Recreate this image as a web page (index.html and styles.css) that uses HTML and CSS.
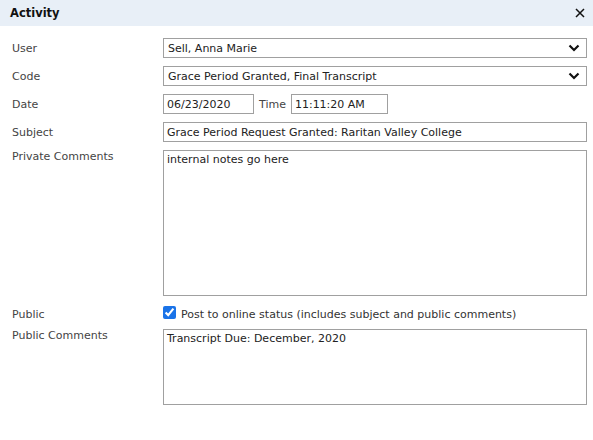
FILE: index.html
```html
<!DOCTYPE html>
<html lang="en">
<head>
    <meta charset="UTF-8">
    <title>Activity</title>
    <link rel="stylesheet" href="styles.css">
</head>
<body>
    <div class="dialog">
        <header class="dialog-title">
            <h1>Activity</h1>
            <span class="close">
                <svg width="10" height="10" viewBox="0 0 10 10"><path d="M1 1 L9 9 M9 1 L1 9" stroke="#111" stroke-width="1.5"/></svg>
            </span>
        </header>

        <div class="form">
            <label class="field-label">User</label>
            <div class="select-box">
                <span>Sell, Anna Marie</span>
                <svg width="12" height="8" viewBox="0 0 12 8"><path d="M1.5 1.5 L6 6 L10.5 1.5" fill="none" stroke="#111" stroke-width="2.2"/></svg>
            </div>

            <label class="field-label">Code</label>
            <div class="select-box">
                <span>Grace Period Granted, Final Transcript</span>
                <svg width="12" height="8" viewBox="0 0 12 8"><path d="M1.5 1.5 L6 6 L10.5 1.5" fill="none" stroke="#111" stroke-width="2.2"/></svg>
            </div>

            <label class="field-label">Date</label>
            <div class="date-row">
                <input class="text-input date-input" type="text" value="06/23/2020">
                <span class="inline-label">Time</span>
                <input class="text-input time-input" type="text" value="11:11:20 AM">
            </div>

            <label class="field-label">Subject</label>
            <input class="text-input" type="text" value="Grace Period Request Granted: Raritan Valley College">

            <label class="field-label top">Private Comments</label>
            <textarea class="text-area private">internal notes go here</textarea>

            <label class="field-label bottom">Public</label>
            <label class="check-row">
                <input type="checkbox" checked>
                <span>Post to online status (includes subject and public comments)</span>
            </label>

            <label class="field-label top">Public Comments</label>
            <textarea class="text-area public">Transcript Due: December, 2020</textarea>
        </div>
    </div>
</body>
</html>
```

FILE: styles.css
```css
/* Dialog base */
body {
    margin: 0;
    font-family: 'DejaVu Sans', sans-serif;
    font-size: 11px;
    color: #333333;
    background: #ffffff;
}

.dialog {
    width: 593px;
}

/* Title bar */
.dialog-title {
    display: flex;
    align-items: center;
    justify-content: space-between;
    height: 26px;
    padding: 0 8px 0 10px;
    background: #e8eff7;
}

.dialog-title h1 {
    margin: 0;
    font-size: 11.5px;
    font-weight: bold;
    color: #111111;
}

.close {
    display: flex;
}

/* Form grid */
.form {
    display: grid;
    grid-template-columns: 151px 1fr;
    row-gap: 8px;
    align-items: center;
    padding: 12px 6px 0 12px;
}

.field-label {
    color: #444444;
}

.field-label.top {
    align-self: start;
}

.field-label.bottom {
    align-self: end;
}

.select-box,
.text-input,
.text-area {
    box-sizing: border-box;
    border: 1px solid #a0a0a0;
    font-family: inherit;
    font-size: 11px;
    color: #222222;
    background: #ffffff;
    margin: 0;
}

.select-box {
    display: flex;
    align-items: center;
    justify-content: space-between;
    height: 20px;
    padding: 0 6px 0 4px;
}

.text-input {
    height: 20px;
    padding: 0 3px;
    width: 100%;
    outline: none;
}

.date-row {
    display: flex;
    align-items: center;
}

.date-row .date-input {
    width: 91px;
}

.date-row .time-input {
    width: 97px;
}

.inline-label {
    margin: 0 5px 0 5px;
    color: #444444;
}

.text-area {
    display: block;
    width: 100%;
    resize: none;
    padding: 2px 3px;
    line-height: 14px;
    outline: none;
}

.text-area.private {
    height: 146px;
}

.text-area.public {
    height: 76px;
}

/* Checkbox row */
.check-row {
    display: flex;
    align-items: flex-end;
    height: 17px;
    color: #333333;
}

.check-row input {
    width: 13px;
    height: 13px;
    margin: 0 5px 2px 0;
    accent-color: #1a73e8;
}
```
